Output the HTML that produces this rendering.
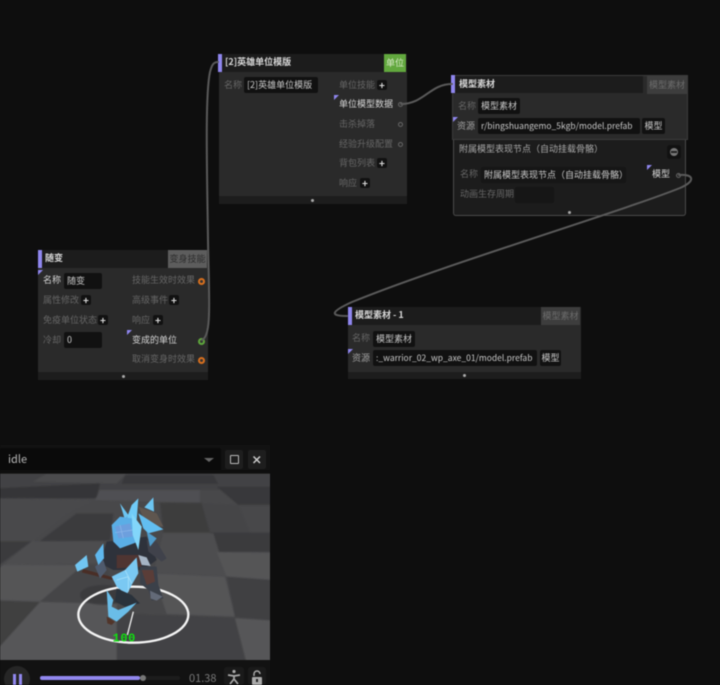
<!DOCTYPE html>
<html lang="zh">
<head>
<meta charset="utf-8">
<title>Node Editor</title>
<style>
html,body{margin:0;padding:0;background:#0e0e0e;}
#page{position:relative;width:720px;height:685px;overflow:hidden;background:#0e0e0e;font-family:"Noto Sans CJK SC","Liberation Sans",sans-serif;font-size:9px;line-height:12px;color:#8a8a8a;filter:blur(.4px);}
#page div,#page span{position:absolute;white-space:nowrap;}
.n{background:#2a2a2a;}
.h{background:#1c1c1c;left:0;top:0;right:0;height:18px;}
.f{background:#1d1d1d;left:0;right:0;bottom:0;height:8px;}
.dot{width:3px;height:3px;border-radius:50%;background:#aaa;}
.bar{width:4px;height:18px;background:#8f86ee;}
.t{color:#d8d8d8;font-weight:bold;}
.l{color:#666;}
.w{color:#d6d6d6;}
.i{background:#111;color:#c8c8c8;border-radius:2px;height:16px;line-height:16px;overflow:hidden;}
.p{width:10px;height:10px;background:#111;border-radius:2px;color:#ddd;text-align:center;line-height:10px;font-size:10px;font-weight:bold;}
.port{width:3px;height:3px;border:1.5px solid #666;border-radius:50%;}
.o{width:3px;height:3px;border:2px solid #d9701e;border-radius:50%;background:#333;}
.c{width:0;height:0;border-top:5px solid #8f86ee;border-right:5px solid transparent;}
.r{font-size:8.5px;}
</style>
</head>
<body>
<div id="page">

<!-- hero template node -->
<div class="n" style="left:219px;top:54px;width:188px;height:150px">
  <div class="h"></div>
  <div class="f"></div>
  <div class="dot" style="left:92px;top:145px"></div>
  <div style="left:165px;top:0;width:22px;height:18px;background:#62a83e;color:#d8e8c8;text-align:center;line-height:18px">单位</div>
  <span class="t" style="left:6px;top:1px;line-height:14px">[2]英雄单位模版</span>
  <span class="l" style="left:5px;top:25px">名称</span>
  <div class="i" style="left:25px;top:23px;width:71px;padding-left:3px">[2]英雄单位模版</div>
  <span class="l" style="left:120px;top:25px">单位技能</span><div class="p" style="left:158px;top:26px">+</div>
  <div class="c" style="left:115px;top:41px"></div>
  <span class="w" style="left:120px;top:44px">单位模型数据</span><div class="port" style="left:179px;top:48px"></div>
  <span class="l" style="left:120px;top:64px">击杀掉落</span><div class="port" style="left:179px;top:68px"></div>
  <span class="l" style="left:120px;top:84px">经验升级配置</span><div class="port" style="left:179px;top:88px"></div>
  <span class="l" style="left:120px;top:103px">背包列表</span><div class="p" style="left:158px;top:104px">+</div>
  <span class="l" style="left:120px;top:123px">响应</span><div class="p" style="left:141px;top:124px">+</div>
</div>
<div class="bar" style="left:218px;top:54px"></div>

<!-- model asset node -->
<div style="left:453px;top:139px;width:233px;height:77px;background:#1c1c1c;border:1px solid #4a4a4a;border-top:0;border-radius:0 0 3px 3px;box-sizing:border-box"></div>
<div class="n" style="left:452px;top:75px;width:236px;height:65px;background:#2a2a2a;border:1px solid #3b3b3b;box-sizing:border-box">
  <div class="h" style="right:44px;top:0;height:17px"></div>
  <div style="left:194px;top:0;width:40px;height:18px;background:#3d3d3d;color:#6c6c6c;text-align:center;line-height:18px">模型素材</div>
  <span class="t" style="left:6px;top:1px;line-height:14px">模型素材</span>
  <span class="l" style="left:5px;top:24px">名称</span>
  <div class="i" style="left:25px;top:22px;width:39px;padding-left:3px">模型素材</div>
  <div class="c" style="left:0;top:41px"></div>
  <span class="l" style="left:4px;top:44px;color:#a0a0a0">资源</span>
  <div class="i r" style="left:25px;top:42px;width:159px;padding-left:3px">r/bingshuangemo_5kgb/model.prefab</div>
  <div class="i" style="left:189px;top:42px;width:23px;text-align:center">模型</div>
</div>
<div class="bar" style="left:451px;top:75px"></div>
<span style="left:459px;top:143px;color:#a8a8a8">附属模型表现节点（自动挂载骨骼）</span>
<div style="left:667px;top:145px;width:14px;height:14px;background:#111;border-radius:3px"></div>
<div style="left:670px;top:148px;width:8px;height:8px;background:#777;border-radius:50%"></div>
<div style="left:671px;top:151px;width:6px;height:2px;background:#222"></div>
<span class="l" style="left:460px;top:168px">名称</span>
<div class="i" style="left:481px;top:167px;width:142px;padding-left:3px;background:#161616">附属模型表现节点（自动挂载骨骼）</div>
<div class="c" style="left:647px;top:165px"></div>
<span class="w" style="left:652px;top:168px">模型</span><div class="port" style="left:676px;top:173px"></div>
<span class="l" style="left:460px;top:188px">动画生存周期</span>
<div style="left:515px;top:187px;width:39px;height:16px;background:#161616;border-radius:2px"></div>
<div class="dot" style="left:568px;top:211px"></div>

<!-- transform node -->
<div class="n" style="left:38px;top:250px;width:170px;height:130px">
  <div class="h" style="height:18px"></div>
  <div class="f"></div>
  <div class="dot" style="left:84px;top:125px"></div>
  <div style="left:130px;top:0;width:39px;height:18px;background:#5d5d5d;color:#2c2c2c;text-align:center;line-height:18px">变身技能</div>
  <span class="t" style="left:7px;top:1px;line-height:14px">随变</span>
  <div class="c" style="left:0;top:20px"></div>
  <span class="w" style="left:5px;top:24px">名称</span>
  <div class="i" style="left:26px;top:23px;width:35px;padding-left:3px">随变</div>
  <span class="l" style="left:5px;top:44px">属性修改</span><div class="p" style="left:43px;top:45px">+</div>
  <span class="l" style="left:5px;top:64px">免疫单位状态</span><div class="p" style="left:60px;top:65px">+</div>
  <span class="l" style="left:5px;top:84px">冷却</span>
  <div class="i" style="left:26px;top:82px;width:35px;padding-left:3px">0</div>
  <span class="l" style="left:94px;top:24px">技能生效时效果</span><div class="o" style="left:160px;top:28px"></div>
  <span class="l" style="left:94px;top:44px">高级事件</span><div class="p" style="left:131px;top:45px">+</div>
  <span class="l" style="left:94px;top:64px">响应</span><div class="p" style="left:115px;top:65px">+</div>
  <div class="c" style="left:89px;top:80px"></div>
  <span class="w" style="left:94px;top:84px">变成的单位</span><div class="o" style="left:160px;top:88px;border-color:#5fa83c"></div>
  <span class="l" style="left:94px;top:103px">取消变身时效果</span><div class="o" style="left:160px;top:107px"></div>
</div>
<div class="bar" style="left:38px;top:250px"></div>

<!-- model asset 1 -->
<div class="n" style="left:348px;top:307px;width:233px;height:72px">
  <div class="h" style="height:18px;right:40px"></div>
  <div class="f" style="height:7px"></div>
  <div class="dot" style="left:115px;top:67px"></div>
  <div style="left:193px;top:0;width:39px;height:18px;background:#3d3d3d;color:#6c6c6c;text-align:center;line-height:18px">模型素材</div>
  <span class="t" style="left:7px;top:1px;line-height:14px">模型素材 - 1</span>
  <span class="l" style="left:4px;top:25px">名称</span>
  <div class="i" style="left:25px;top:24px;width:39px;padding-left:3px">模型素材</div>
  <div class="c" style="left:0;top:42px"></div>
  <span class="l" style="left:4px;top:45px;color:#a0a0a0">资源</span>
  <div class="i r" style="left:25px;top:43px;width:161px;padding-left:3px">:_warrior_02_wp_axe_01/model.prefab</div>
  <div class="i" style="left:192px;top:43px;width:21px;text-align:center">模型</div>
</div>
<div class="bar" style="left:348px;top:307px"></div>

<!-- wires on top of nodes -->
<svg style="position:absolute;left:0;top:0" width="720" height="445" fill="none" stroke="#5a5a5a" stroke-width="2" stroke-linecap="round">
<path d="M202 340C212 336 209 300 208 240C207 170 205 95 210 72C212 64 214 62 218 62"/>
<path d="M401 104C424 104 430 84 452 84"/>
<path d="M679 175C694 174 696 181 680 188C620 212 440 266 352 302C330 312 330 316 347 316"/>
</svg>

<!-- preview panel -->
<div style="left:0;top:445px;width:270px;height:240px;background:#121212"></div>
<div style="left:0;top:448px;width:221px;height:23px;background:#0a0a0a;border-radius:2px"></div>
<span style="left:8px;top:451px;font-size:11px;line-height:16px;color:#b8b8b8">idle</span>
<div style="left:204px;top:458px;width:0;height:0;border:5px solid transparent;border-top:4px solid #666;border-bottom:0"></div>
<div style="left:225px;top:450px;width:18px;height:19px;background:#1e1e1e;border-radius:2px"></div>
<div style="left:230px;top:455px;width:7px;height:7px;border:1.5px solid #bbb;border-radius:1px"></div>
<div style="left:248px;top:450px;width:18px;height:19px;background:#1e1e1e;border-radius:2px"></div>
<svg style="position:absolute;left:252px;top:455px" width="10" height="10" stroke="#ccc" stroke-width="1.5"><path d="M1.5 1.5L8 8M8 1.5L1.5 8"/></svg>

<svg style="position:absolute;left:0;top:470px" width="270" height="191" viewBox="0 0 810 573">
<defs><filter id="s" x="-5%" y="-5%" width="110%" height="110%"><feGaussianBlur stdDeviation="2.5"/></filter><filter id="m" x="-5%" y="-5%" width="110%" height="110%"><feGaussianBlur stdDeviation="1"/></filter></defs>
<rect width="810" height="573" fill="#48484a"/>
<g filter="url(#s)">
<polygon points="-10,11 820,11 820,60 -10,60" fill="#424244"/>
<polygon points="140,11 380,11 350,40 100,35" fill="#4c4c4e"/>
<polygon points="-10,55 300,40 290,85 -10,85" fill="#363638"/>
<polygon points="375,15 640,15 655,42 365,42" fill="#39393b"/>
<polygon points="650,50 820,50 820,105 715,105" fill="#38383a"/>
<polygon points="-10,85 285,90 200,130 -10,130" fill="#4a4a4c"/>
<polygon points="300,60 600,60 600,98 285,90" fill="#505052"/>
<polygon points="230,130 340,130 330,212 118,214" fill="#3b3b3d"/>
<polygon points="480,98 605,98 630,188 490,188" fill="#3c3c3e"/>
<polygon points="605,100 715,105 750,188 630,188" fill="#454547"/>
<polygon points="630,188 820,188 820,246 650,246" fill="#3a3a3c"/>
<polygon points="-10,130 200,130 100,212 -10,212" fill="#4a4a4c"/>
<polygon points="-10,214 95,214 -10,290" fill="#3b3b3d"/>
<polygon points="95,214 310,214 290,280 10,285" fill="#4d4d4f"/>
<polygon points="490,190 640,190 680,318 460,308" fill="#4d4d4f"/>
<polygon points="650,246 820,248 820,330 680,320" fill="#545456"/>
<polygon points="10,285 250,285 120,395 -10,390 -10,300" fill="#545456"/>
<polygon points="250,285 320,290 350,400 120,395" fill="#444446"/>
<polygon points="-10,392 120,396 -10,540" fill="#3f3f41"/>
<polygon points="120,396 350,402 350,585 -10,585 -10,540" fill="#565658"/>
<polygon points="460,310 675,320 705,440 500,432" fill="#545456"/>
<polygon points="680,320 820,330 820,452 705,442" fill="#414143"/>
<polygon points="350,430 705,442 740,585 350,585" fill="#434345"/>
<polygon points="705,445 820,452 820,585 742,585" fill="#565658"/>
<ellipse cx="310" cy="375" rx="70" ry="30" fill="#333335" opacity=".6"/>
</g>
<rect width="810" height="11" fill="#0e0e0e"/>
<rect y="570" width="810" height="3" fill="#121212"/>
<ellipse cx="400" cy="434" rx="165" ry="84" fill="none" stroke="#f4f4f4" stroke-width="7"/>
<path d="M400 425L382 495" stroke="#eee" stroke-width="4"/>
<!-- character -->
<g filter="url(#m)">
<polygon points="320,215 440,200 470,270 430,300 340,300 300,280" fill="#2f333a"/>
<polygon points="440,210 470,215 500,265 485,275 445,245" fill="#3f434c"/>
<polygon points="420,290 470,290 475,345 490,385 455,392 445,360 420,340" fill="#3a3f49"/>
<polygon points="425,300 460,300 465,335 440,345" fill="#5a3d38"/>
<polygon points="450,362 488,380 470,392 452,386" fill="#646a78"/>
<polygon points="250,297 340,322 335,330 245,307" fill="#4a2e28"/>
<polygon points="350,255 415,255 425,290 350,295" fill="#4f3430"/>
<polygon points="415,110 470,130 490,170 440,165" fill="#5e5650"/>
<polygon points="285,290 310,270 320,300 300,325" fill="#505a6c"/>
<polygon points="415,255 440,262 452,288 425,285" fill="#a5b4c4"/>
<polygon points="360,100 385,135 375,150" fill="#6cc5f2"/>
<polygon points="415,85 410,150 380,145 395,105" fill="#6fcbf8"/>
<polygon points="460,82 462,125 433,112" fill="#6cc5f2"/>
<polygon points="335,165 360,140 395,145 420,175 415,215 360,235 340,215" fill="#5aaee6"/>
<polygon points="345,170 390,160 400,200 355,205" fill="#6d9fde"/>
<path d="M360 165L370 205M345 188L398 180" stroke="#8fb9ea" stroke-width="2"/>
<polygon points="395,130 425,170 415,240 398,195" fill="#82d6fa"/>
<polygon points="415,130 490,178 445,190 430,175" fill="#62bef0"/>
<polygon points="440,185 470,205 450,230" fill="#4f9ccc"/>
<polygon points="285,255 310,220 312,265 295,285" fill="#5fb8ee"/>
<polygon points="225,285 260,255 265,290 232,305" fill="#71c6f2"/>
<polygon points="335,320 375,300 410,262 415,310 395,345 380,375 350,350" fill="#7ac8f2"/>
<path d="M350 330L385 320L385 365M375 300L395 340" stroke="#a6e0fa" stroke-width="2.5" fill="none"/>
<polygon points="350,355 395,375 420,400 375,410 345,395" fill="#29303a"/>
<polygon points="320,360 340,390 335,410 355,420 410,398 385,425 350,455 325,440" fill="#6bbde8"/>
<polygon points="320,440 345,455 335,465 322,460" fill="#51342a"/>
</g>
<text x="338" y="515" font-family="Liberation Mono,monospace" font-size="36" font-weight="bold" fill="#10e010" textLength="68">100</text>
</svg>

<div style="left:0;top:661px;width:270px;height:24px;background:#121212"></div>
<div style="left:4px;top:666px;width:26px;height:26px;background:#262626;border-radius:50%"></div>
<div style="left:13px;top:674px;width:3px;height:11px;background:#9187ee"></div>
<div style="left:19px;top:674px;width:3px;height:11px;background:#9187ee"></div>
<div style="left:40px;top:676px;width:140px;height:4px;background:#1c1c1c;border-radius:2px"></div>
<div style="left:40px;top:676px;width:100px;height:4px;background:#9187ee;border-radius:2px"></div>
<div style="left:140px;top:675px;width:6px;height:6px;background:#777;border-radius:50%"></div>
<span style="left:189px;top:670px;font-size:11px;line-height:16px;color:#777">01.38</span>
<div style="left:224px;top:667px;width:20px;height:18px;background:#1a1a1a;border-radius:3px"></div>
<svg style="position:absolute;left:226px;top:669px" width="16" height="16" fill="none" stroke="#aaa" stroke-width="1.7"><circle cx="8" cy="2.5" r="1.6" fill="#aaa" stroke="none"/><path d="M2 6L8 7L14 6M8 7V10L4 15M8 10L12 15"/></svg>
<div style="left:248px;top:667px;width:18px;height:18px;background:#1a1a1a;border-radius:3px"></div>
<svg style="position:absolute;left:250px;top:670px" width="14" height="15"><path d="M4 6V4a3 3 0 0 1 6 0" fill="none" stroke="#aaa" stroke-width="1.5"/><rect x="2" y="7" width="10" height="8" rx="1" fill="#aaa"/><rect x="6" y="9" width="2" height="3" fill="#222"/></svg>

</div>
</body>
</html>
